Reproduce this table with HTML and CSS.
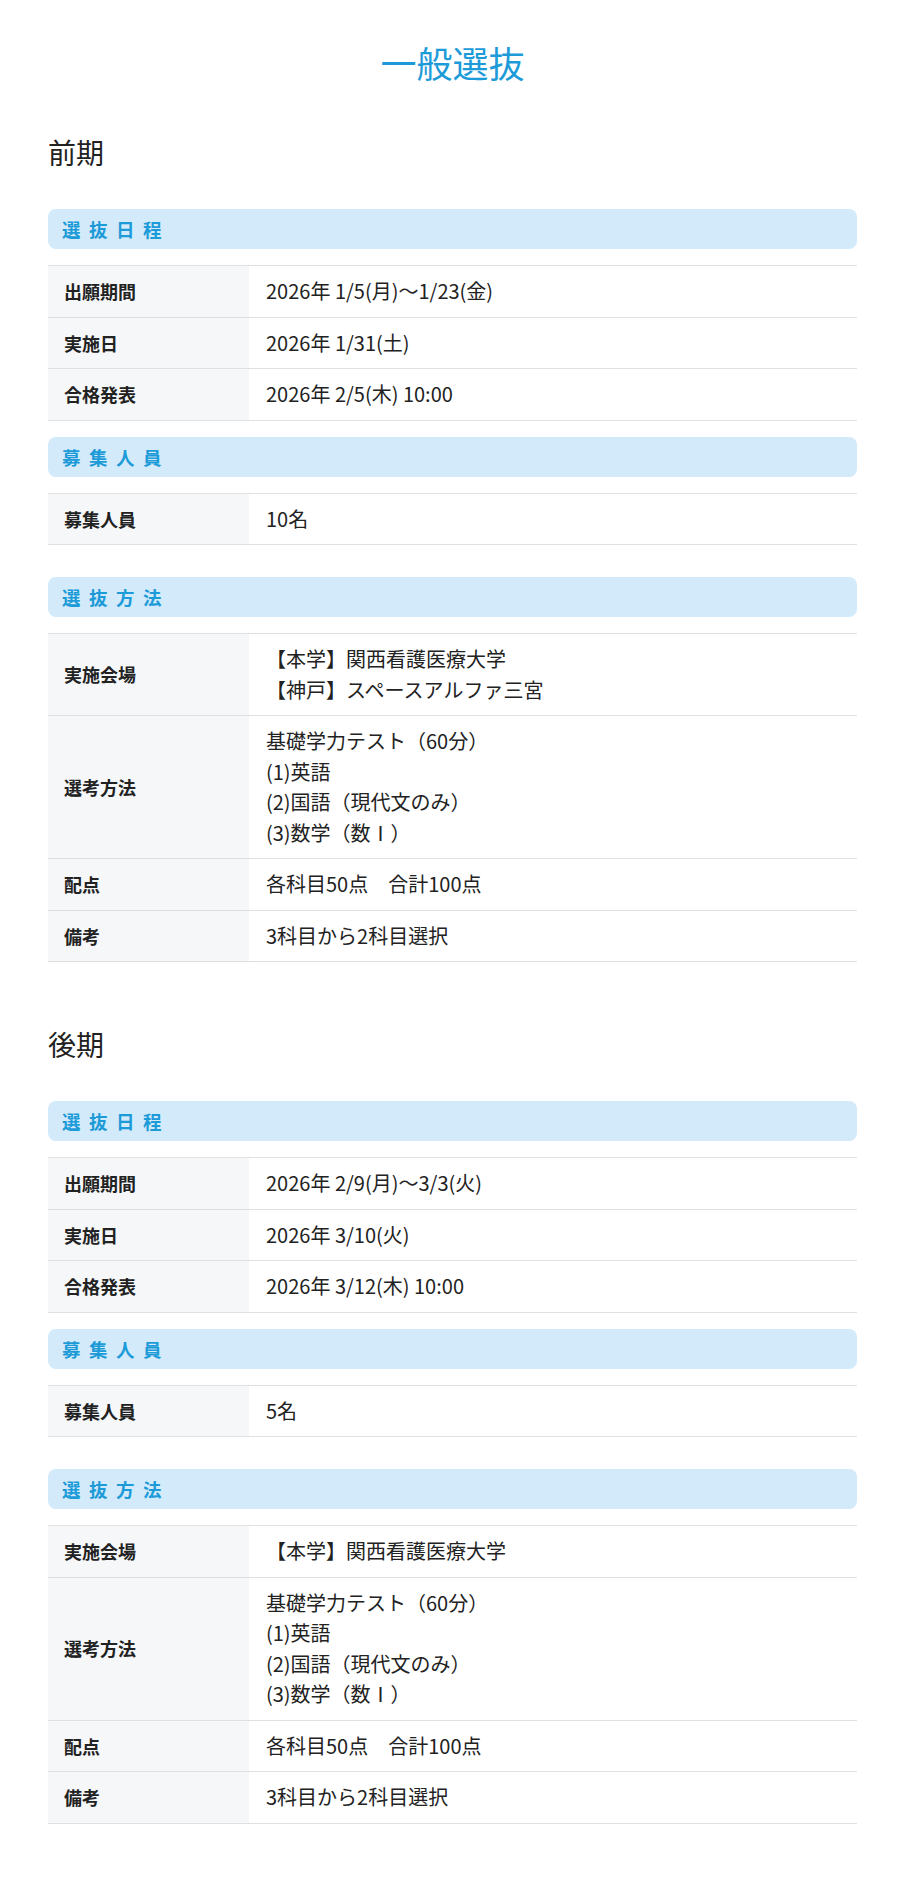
FILE: index.html
```html
<!DOCTYPE html>
<html lang="ja">
<head>
<meta charset="utf-8">
<title>一般選抜</title>
<link rel="stylesheet" href="styles.css">
</head>
<body>
<main class="page">
  <h1 class="title">一般選抜</h1>

  <section class="term">
    <h2 class="term-title">前期</h2>

    <div class="block">
      <h3 class="bar">選抜日程</h3>
      <table class="info">
        <tr><th>出願期間</th><td>2026年 1/5(月)～1/23(金)</td></tr>
        <tr><th>実施日</th><td>2026年 1/31(土)</td></tr>
        <tr><th>合格発表</th><td>2026年 2/5(木) 10:00</td></tr>
      </table>
    </div>

    <div class="block block--wide">
      <h3 class="bar">募集人員</h3>
      <table class="info">
        <tr><th>募集人員</th><td>10名</td></tr>
      </table>
    </div>

    <div class="block block--last">
      <h3 class="bar">選抜方法</h3>
      <table class="info">
        <tr><th>実施会場</th><td>【本学】関西看護医療大学<br>【神戸】スペースアルファ三宮</td></tr>
        <tr><th>選考方法</th><td>基礎学力テスト（60分）<br>(1)英語<br>(2)国語（現代文のみ）<br>(3)数学（数Ⅰ）</td></tr>
        <tr><th>配点</th><td>各科目50点　合計100点</td></tr>
        <tr><th>備考</th><td>3科目から2科目選択</td></tr>
      </table>
    </div>
  </section>

  <section class="term">
    <h2 class="term-title">後期</h2>

    <div class="block">
      <h3 class="bar">選抜日程</h3>
      <table class="info">
        <tr><th>出願期間</th><td>2026年 2/9(月)～3/3(火)</td></tr>
        <tr><th>実施日</th><td>2026年 3/10(火)</td></tr>
        <tr><th>合格発表</th><td>2026年 3/12(木) 10:00</td></tr>
      </table>
    </div>

    <div class="block block--wide">
      <h3 class="bar">募集人員</h3>
      <table class="info">
        <tr><th>募集人員</th><td>5名</td></tr>
      </table>
    </div>

    <div class="block block--last">
      <h3 class="bar">選抜方法</h3>
      <table class="info">
        <tr><th>実施会場</th><td>【本学】関西看護医療大学</td></tr>
        <tr><th>選考方法</th><td>基礎学力テスト（60分）<br>(1)英語<br>(2)国語（現代文のみ）<br>(3)数学（数Ⅰ）</td></tr>
        <tr><th>配点</th><td>各科目50点　合計100点</td></tr>
        <tr><th>備考</th><td>3科目から2科目選択</td></tr>
      </table>
    </div>
  </section>
</main>
</body>
</html>
```

FILE: styles.css
```css
* { box-sizing: border-box; }

html, body {
  margin: 0;
  padding: 0;
  background: #ffffff;
}

body {
  font-family: "Noto Sans CJK JP", "Noto Sans", sans-serif;
  color: #222222;
}

.page {
  padding: 35px 48px 53px;
}

.title {
  margin: 0 0 42px;
  font-size: 36px;
  line-height: 54px;
  font-weight: 400;
  color: #1d9bd8;
  text-align: center;
}

.term + .term {
  margin-top: 61px;
}

.term-title {
  margin: 0 0 36px;
  font-size: 28px;
  line-height: 42px;
  font-weight: 400;
  color: #222222;
}

.block {
  margin-bottom: 16px;
}

.block--wide {
  margin-bottom: 32px;
}

.block--last {
  margin-bottom: 0;
}

.bar {
  margin: 0 0 16px;
  height: 40px;
  display: flex;
  align-items: center;
  padding: 0 14px;
  background: #d3eafb;
  border-radius: 8px;
  font-size: 18.5px;
  font-weight: 700;
  letter-spacing: 8.5px;
  color: #1d9bd8;
}

.info {
  width: 100%;
  border-collapse: collapse;
  border-top: 1px solid #e0e0e0;
}

.info tr {
  border-bottom: 1px solid #e0e0e0;
}

.info th {
  width: 201px;
  padding: 10px 16px;
  background: #f5f7f9;
  text-align: left;
  vertical-align: middle;
  font-size: 18px;
  font-weight: 700;
  line-height: 30.5px;
  color: #222222;
}

.info td {
  padding: 10px 17px;
  font-size: 20px;
  font-weight: 400;
  line-height: 30.5px;
  color: #222222;
  vertical-align: middle;
}
```
